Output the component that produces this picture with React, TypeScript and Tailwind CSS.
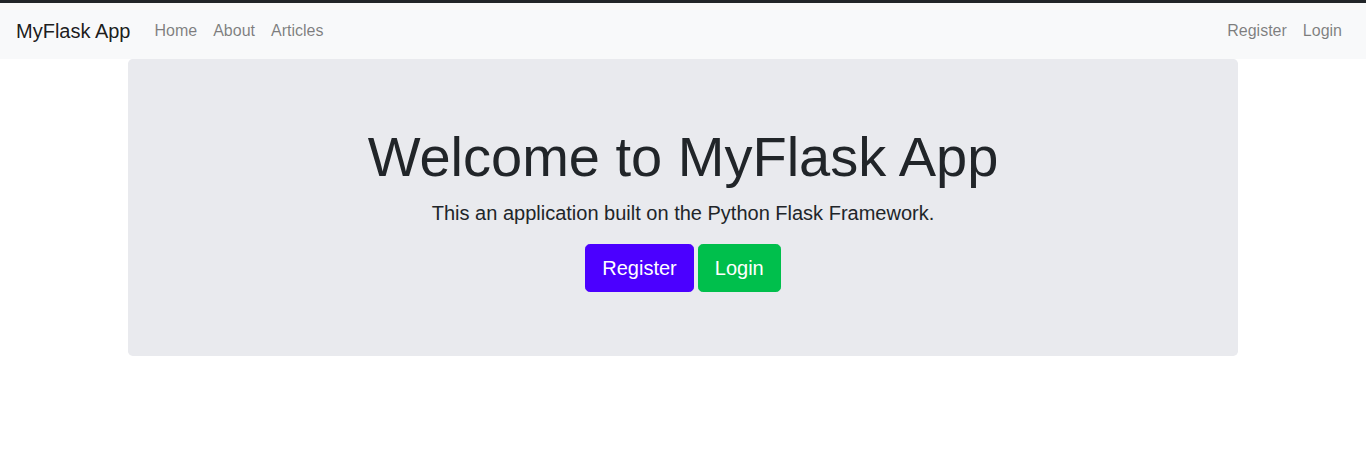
export default function App() {
  return (
    <div className="min-h-[452px] bg-white text-[#212529]" style={{ fontFamily: '"Liberation Sans", Arial, sans-serif' }}>
      {/* Navbar */}
      <nav className="flex items-center border-t-[3px] border-[#212529] bg-[#f8f9fa] px-4 py-2">
        <a className="mr-4 py-[5px] text-[20px] leading-[30px] text-[rgba(0,0,0,0.9)]">MyFlask App</a>
        <ul className="flex">
          <li><a className="block p-2 text-base leading-6 text-[rgba(0,0,0,0.5)]">Home</a></li>
          <li><a className="block p-2 text-base leading-6 text-[rgba(0,0,0,0.5)]">About</a></li>
          <li><a className="block p-2 text-base leading-6 text-[rgba(0,0,0,0.5)]">Articles</a></li>
        </ul>
        <ul className="ml-auto flex">
          <li><a className="block p-2 text-base leading-6 text-[rgba(0,0,0,0.5)]">Register</a></li>
          <li><a className="block p-2 text-base leading-6 text-[rgba(0,0,0,0.5)]">Login</a></li>
        </ul>
      </nav>

      {/* Jumbotron */}
      <div className="mx-auto w-[1110px]">
        <div className="rounded-[4.8px] bg-[#e9eaee] px-8 pt-16 pb-16 text-center">
          <h1 className="mb-2 text-[56px] font-light leading-[1.2]">Welcome to MyFlask App</h1>
          <p className="mb-4 text-[20px] font-light leading-[30px]">This an application built on the Python Flask Framework.</p>
          <div className="flex justify-center gap-1">
            <a className="rounded-[4.8px] border border-[#4b00ff] bg-[#4b00ff] px-4 py-2 text-[20px] leading-[30px] text-white">Register</a>
            <a className="rounded-[4.8px] border border-[#00bf4c] bg-[#00bf4c] px-4 py-2 text-[20px] leading-[30px] text-white">Login</a>
          </div>
        </div>
      </div>
    </div>
  );
}
